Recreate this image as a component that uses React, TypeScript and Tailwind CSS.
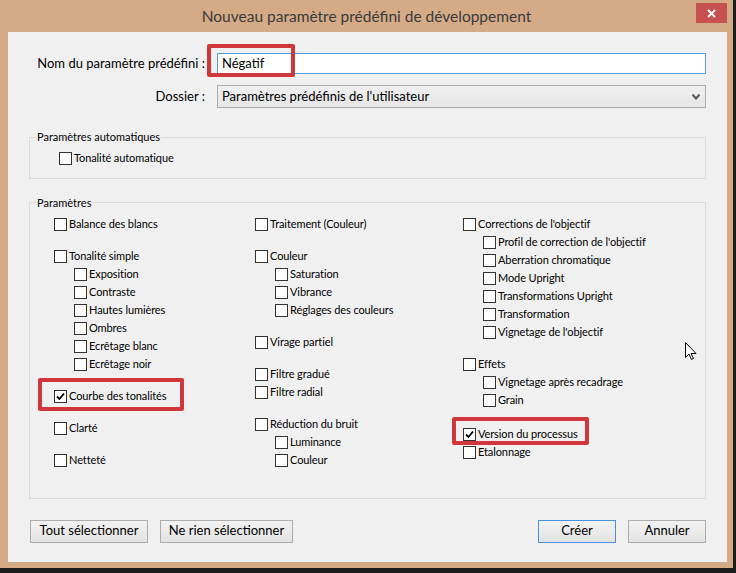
import React from 'react';

const font = { fontFamily: '"Segoe UI", Lato, "Liberation Sans", sans-serif' };

interface CheckProps {
  label: string;
  checked?: boolean;
  sub?: boolean;
}

function Check({ label, checked, sub }: CheckProps) {
  return (
    <div className={`flex items-center h-[18px] gap-[2px] ${sub ? 'pl-[20px]' : ''}`}>
      <span className="w-[13px] h-[13px] border border-[#333333] bg-white flex items-center justify-center shrink-0">
        {checked && (
          <svg width="9" height="9" viewBox="0 0 9 9">
            <path d="M1 4.5 L3.5 7 L8 1.5" fill="none" stroke="#000" strokeWidth="1.8" />
          </svg>
        )}
      </span>
      <span className="text-[11px] tracking-[-0.1px] text-black whitespace-nowrap">{label}</span>
    </div>
  );
}

function Group({ children, first }: { children: React.ReactNode; first?: boolean }) {
  return <div className={first ? '' : 'mt-[14px]'}>{children}</div>;
}

function Button({ label, primary, className }: { label: string; primary?: boolean; className?: string }) {
  return (
    <button
      className={`h-[23px] text-[13px] text-black bg-gradient-to-b from-[#f2f2f2] to-[#e3e3e3] border ${
        primary ? 'border-[#4a90e2]' : 'border-[#adadad]'
      } ${className ?? ''}`}
    >
      {label}
    </button>
  );
}

export default function App() {
  return (
    <div className="w-[736px] h-[573px] bg-[#1c1c1c] relative overflow-hidden" style={font}>
      <div className="w-[733px] h-[568px] bg-[#d5ab87] flex flex-col">
        {/* title bar */}
        <div className="h-[32px] flex items-start relative">
          <div className="flex-1 text-center text-[15.5px] leading-[32px] text-[#3a3a3a]">
            Nouveau paramètre prédéfini de développement
          </div>
          <div className="absolute right-[6px] top-[3px] w-[31px] h-[20px] bg-[#c75050] flex items-center justify-center">
            <svg width="9" height="9" viewBox="0 0 9 9">
              <path d="M1 1 L8 8 M8 1 L1 8" stroke="#fff" strokeWidth="1.8" />
            </svg>
          </div>
        </div>

        {/* client area */}
        <div className="ml-[8px] w-[719px] h-[530px] bg-[#f0f0f0] relative">
          <div className="flex items-center pt-[21px]">
            <div className="w-[197px] text-right text-[13px] text-black">Nom du paramètre prédéfini :</div>
            <div className="ml-[12px] w-[489px] h-[21px] border border-[#569de5] bg-white flex items-center px-[4px] text-[13px] text-black">
              Négatif
            </div>
          </div>
          <div className="flex items-center mt-[11px]">
            <div className="w-[197px] text-right text-[13px] text-black">Dossier :</div>
            <div className="ml-[12px] w-[489px] h-[23px] border border-[#acacac] bg-gradient-to-b from-[#f0f0f0] to-[#e5e5e5] flex items-center justify-between px-[4px] text-[13px] text-black">
              <span>Paramètres prédéfinis de l'utilisateur</span>
              <svg width="8" height="6" viewBox="0 0 8 6" className="mr-[1px]">
                <path d="M0.5 0.5 L4 4.5 L7.5 0.5" fill="none" stroke="#555" strokeWidth="2" />
              </svg>
            </div>
          </div>

          {/* auto params */}
          <fieldset className="ml-[21px] mt-[21px] w-[677px] border border-[#dcdcdc] pb-[10px] pt-[4px]">
            <legend className="ml-[6px] px-[1px] text-[11px] text-black">Paramètres automatiques</legend>
            <div className="pl-[29px]">
              <Check label="Tonalité automatique" />
            </div>
          </fieldset>

          {/* params */}
          <fieldset className="ml-[21px] mt-[16px] w-[677px] h-[304px] border border-[#dcdcdc] pt-[4px]">
            <legend className="ml-[6px] px-[1px] text-[11px] text-black">Paramètres</legend>
            <div className="grid grid-cols-[201px_208px_1fr] pl-[24px]">
              <div>
                <Group first>
                  <Check label="Balance des blancs" />
                </Group>
                <Group>
                  <Check label="Tonalité simple" />
                  <Check sub label="Exposition" />
                  <Check sub label="Contraste" />
                  <Check sub label="Hautes lumières" />
                  <Check sub label="Ombres" />
                  <Check sub label="Ecrêtage blanc" />
                  <Check sub label="Ecrêtage noir" />
                </Group>
                <Group>
                  <Check checked label="Courbe des tonalités" />
                </Group>
                <Group>
                  <Check label="Clarté" />
                </Group>
                <Group>
                  <Check label="Netteté" />
                </Group>
              </div>
              <div>
                <Group first>
                  <Check label="Traitement (Couleur)" />
                </Group>
                <Group>
                  <Check label="Couleur" />
                  <Check sub label="Saturation" />
                  <Check sub label="Vibrance" />
                  <Check sub label="Réglages des couleurs" />
                </Group>
                <Group>
                  <Check label="Virage partiel" />
                </Group>
                <Group>
                  <Check label="Filtre gradué" />
                  <Check label="Filtre radial" />
                </Group>
                <Group>
                  <Check label="Réduction du bruit" />
                  <Check sub label="Luminance" />
                  <Check sub label="Couleur" />
                </Group>
              </div>
              <div>
                <Group first>
                  <Check label="Corrections de l'objectif" />
                  <Check sub label="Profil de correction de l'objectif" />
                  <Check sub label="Aberration chromatique" />
                  <Check sub label="Mode Upright" />
                  <Check sub label="Transformations Upright" />
                  <Check sub label="Transformation" />
                  <Check sub label="Vignetage de l'objectif" />
                </Group>
                <Group>
                  <Check label="Effets" />
                  <Check sub label="Vignetage après recadrage" />
                  <Check sub label="Grain" />
                </Group>
                <div className="mt-[16px]">
                  <Check checked label="Version du processus" />
                  <Check label="Etalonnage" />
                </div>
              </div>
            </div>
          </fieldset>

          {/* buttons */}
          <div className="flex items-center mt-[21px] pl-[22px] pr-[21px]">
            <Button label="Tout sélectionner" className="w-[118px]" />
            <Button label="Ne rien sélectionner" className="w-[133px] ml-[12px]" />
            <div className="flex-1" />
            <Button primary label="Créer" className="w-[78px]" />
            <Button label="Annuler" className="w-[78px] ml-[12px]" />
          </div>

          {/* red annotation boxes */}
          <div className="absolute left-[199px] top-[12px] w-[88px] h-[33px] border-[4px] border-[#d1363b] rounded-[2px]" />
          <div className="absolute left-[30px] top-[346px] w-[146px] h-[33px] border-[4px] border-[#d1363b] rounded-[2px]" />
          <div className="absolute left-[444px] top-[385px] w-[137px] h-[28px] border-[4px] border-[#d1363b] rounded-[2px]" />

          {/* mouse pointer */}
          <svg className="absolute left-[677px] top-[310px]" width="13" height="20" viewBox="0 0 13 20">
            <path
              d="M0.5 0.5 L0.5 15.5 L4 12 L6.5 17.5 L8.5 16.5 L6 11.5 L11 11.5 Z"
              fill="#fff"
              stroke="#000"
              strokeWidth="1"
            />
          </svg>
        </div>
      </div>
    </div>
  );
}
